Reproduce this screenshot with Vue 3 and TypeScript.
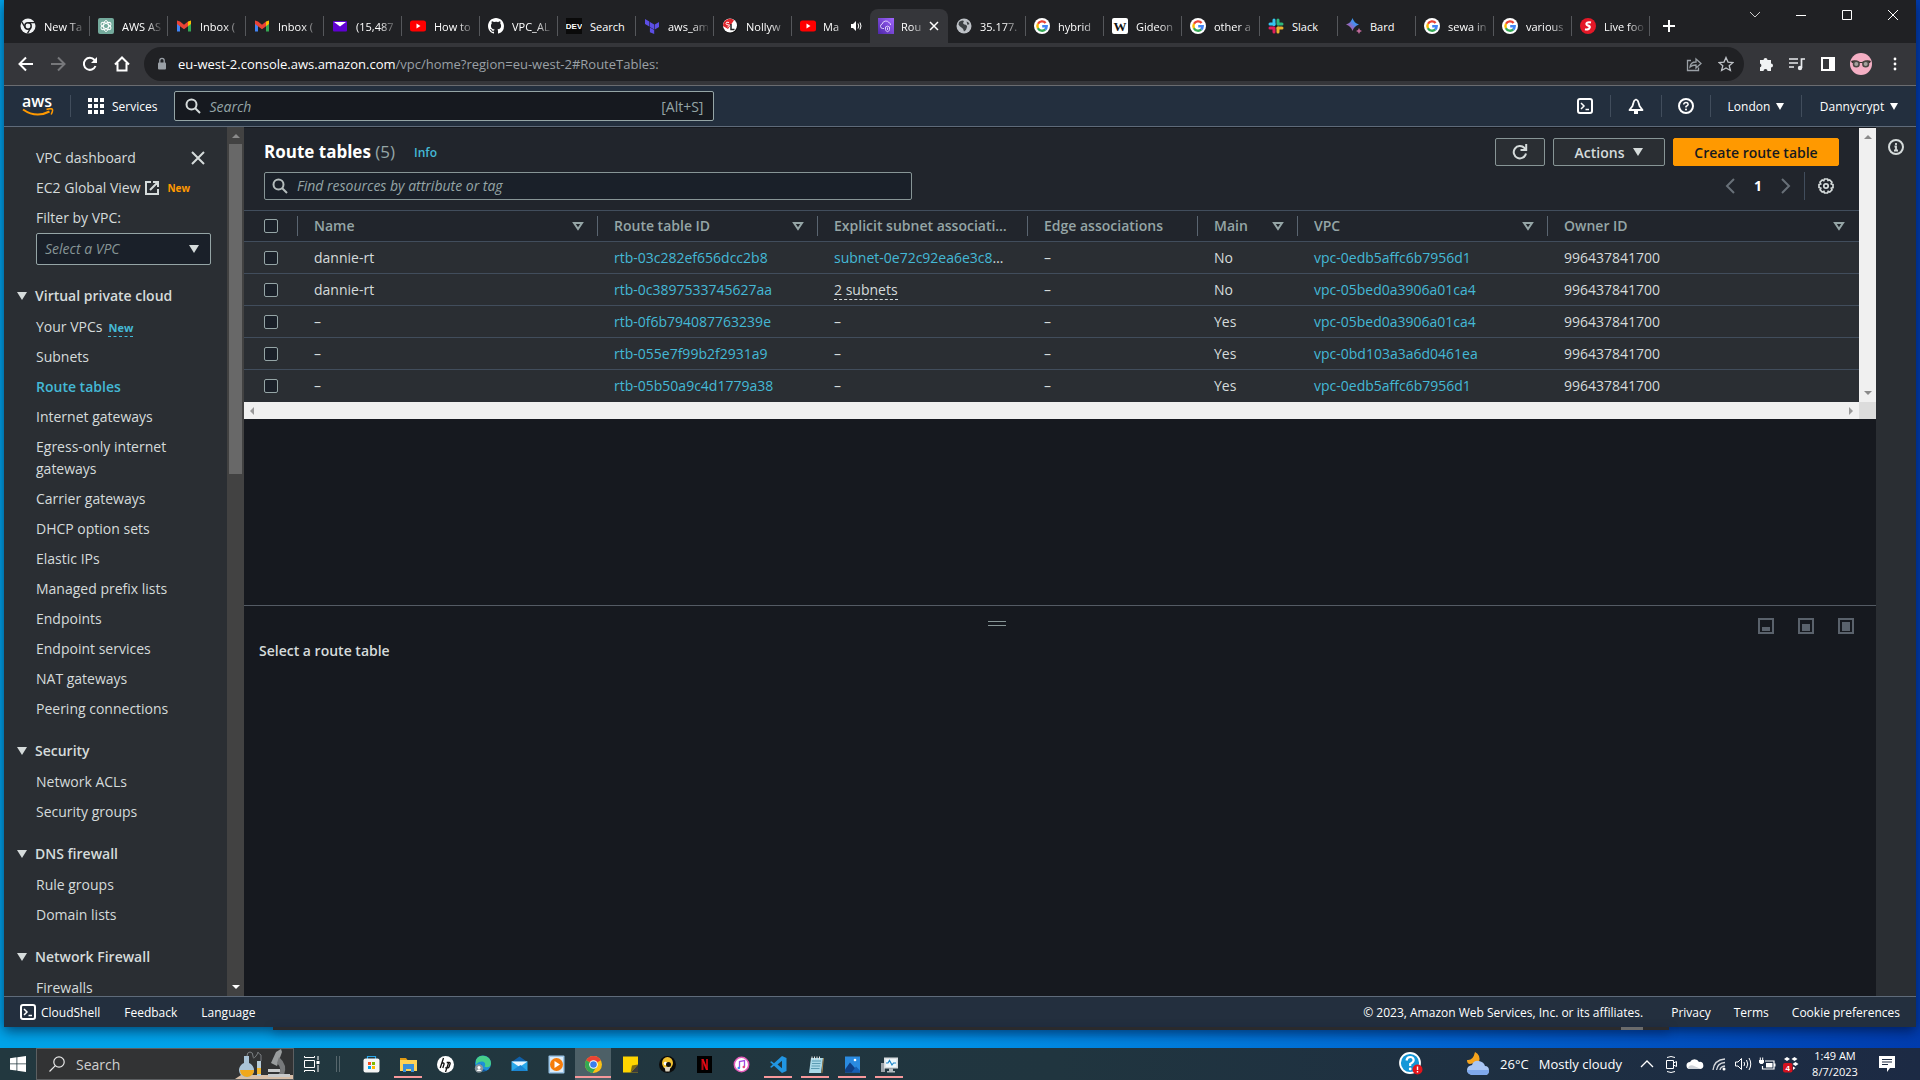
<script setup lang="ts">
interface Tab {
  label: string
  icon: string
  active?: boolean
  audio?: boolean
}

interface RouteTable {
  name: string
  id: string
  subnet: string
  subnetKind: 'link' | 'popover' | 'none'
  main: string
  vpc: string
}

interface NavSection {
  title: string
  items: { label: string; current?: boolean; isNew?: boolean }[]
}

interface TaskApp {
  label: string
  icon: string
  open?: boolean
  focused?: boolean
}

const google =
  '<circle cx="8" cy="8" r="8" fill="#fff"/><g fill="none" stroke-width="2.4"><path d="M11.600 5A4.600 4.600 0 0 0 4 5.800" stroke="#ea4335"/><path d="M4 5.700a4.800 4.800 0 0 0 0 4.600" stroke="#fbbc05"/><path d="M3.900 10.200a4.700 4.700 0 0 0 7.400 1.200" stroke="#34a853"/><path d="M11.200 11.500A4.700 4.700 0 0 0 12.700 8.200H8.200" stroke="#4285f4"/></g>'
const gmail =
  '<path d="M1 4v9.500h3V7.500z" fill="#4285f4"/><path d="M15 4v9.500h-3V7.500z" fill="#34a853"/><path d="M12 3.500l3-1v3.500l-3 2.200z" fill="#fbbc04"/><path d="M1 2.500l3 1 4 3.200 4-3.200v4.700L8 11.200 1 6z" fill="#ea4335"/>'
const youtube =
  '<rect x="0" y="2.500" width="16" height="11" rx="2.500" fill="#f00"/><path d="M6.500 5.500v5L10.500 8z" fill="#fff"/>'

const icons: Record<string, string> = {
  chromeMono:
    '<circle cx="8" cy="8" r="7.500" fill="#f1f3f4"/><circle cx="8" cy="8" r="3.200" fill="#f1f3f4" stroke="#202124" stroke-width="1.500"/><path d="M8 4.700h7M5.200 9.600L1.800 3.800M10.900 9.500L7.500 15.300" stroke="#202124" stroke-width="1.300"/>',
  openai:
    '<rect width="16" height="16" rx="2" fill="#74aa9c"/><g fill="none" stroke="#fff" stroke-width="0.900"><ellipse cx="8" cy="8" rx="2.500" ry="5.500"/><ellipse cx="8" cy="8" rx="2.500" ry="5.500" transform="rotate(60 8 8)"/><ellipse cx="8" cy="8" rx="2.500" ry="5.500" transform="rotate(120 8 8)"/></g>',
  gmail,
  yahoo:
    '<rect x="1" y="3" width="14" height="10.500" rx="1" fill="#5f01d1"/><path d="M2 4h12L8 8.500z" fill="#fff"/>',
  youtube,
  github:
    '<path fill="#fff" d="M8 0C3.580 0 0 3.580 0 8c0 3.540 2.290 6.530 5.470 7.590.4.070.55-.17.55-.38v-1.500c-2.010.37-2.530-.49-2.690-.94-.09-.23-.48-.94-.82-1.130-.28-.15-.68-.52-.01-.53.63-.01 1.080.58 1.230.82.72 1.210 1.870.87 2.330.66.07-.52.28-.87.51-1.070-1.780-.2-3.640-.89-3.640-3.950 0-.87.31-1.590.82-2.150-.08-.2-.36-1.020.08-2.120 0 0 .67-.21 2.200.82A7.600 7.600 0 0 1 8 3.870c.68 0 1.360.09 2 .27 1.530-1.040 2.200-.82 2.200-.82.44 1.100.16 1.920.08 2.120.51.56.82 1.270.82 2.150 0 3.070-1.870 3.750-3.650 3.950.29.25.54.73.54 1.480v2.190c0 .21.15.46.55.38A8 8 0 0 0 16 8c0-4.420-3.580-8-8-8z"/>',
  dev: '<rect width="16" height="16" fill="#0a0a0a"/><text x="8" y="11" text-anchor="middle" font-family="Liberation Sans, sans-serif" font-size="8" font-weight="700" fill="#fff">DEV</text>',
  terraform:
    '<path d="M1 1l4.300 2.500v5L1 6zM5.900 4l4.300 2.500v5L5.900 9zM15 4l-4.200 2.500v5L15 9zM5.900 9.600l4.300 2.500V16l-4.300-1.800z" fill="#5c4ee5"/>',
  nolly:
    '<circle cx="8.500" cy="8.500" r="7" fill="#111"/><circle cx="8" cy="7.500" r="7" fill="#fff"/><path d="M1 8A7 7 0 0 1 12 2.200L6 11z" fill="#e1272d"/><path d="M9 6v5.500h3.500" stroke="#222" stroke-width="1.500" fill="none"/><path d="M7 4.500q-3-1-3 .8t2.500 1.500-1 2.200" stroke="#fff" fill="none"/>',
  vpc: '<defs><linearGradient id="vp" x1="0" y1="1" x2="1" y2="0"><stop offset="0" stop-color="#4d27a8"/><stop offset="1" stop-color="#a166ff"/></linearGradient></defs><rect width="16" height="16" fill="url(#vp)"/><path d="M6 10.500H4.500A2.300 2.300 0 0 1 4.200 6 3.800 3.800 0 0 1 11 4.600 2.300 2.300 0 0 1 12.600 7M7.500 9v2.500c0 1.200 1 1.700 2 2.200 1-.5 2-1 2-2.200V9l-2-.9zM9.500 9.500v2.500" fill="none" stroke="#e9dcff" stroke-width="0.900"/>',
  globe:
    '<circle cx="8" cy="8" r="7.500" fill="#bdc1c6"/><path d="M3 4q3-2.500 5-1-2 2.500.5 3.500 3 .5 2.500 2.500-.5 3.500-3 4.500-.5-3-2.500-4T2.500 6.500z" fill="#3c4043"/><path d="M10.500 3.500q2 0 3 2.500l-2 1z" fill="#3c4043"/>',
  google,
  wiki: '<rect width="16" height="16" rx="2" fill="#fff"/><text x="8" y="12.500" text-anchor="middle" font-family="Liberation Serif, serif" font-size="13" font-weight="700" fill="#111">W</text>',
  slack:
    '<g stroke-width="3" stroke-linecap="round"><path d="M6 2v4.500" stroke="#36c5f0"/><path d="M2 6h4" stroke="#36c5f0"/><path d="M10 2v4" stroke="#2eb67d"/><path d="M10.500 6H14" stroke="#2eb67d"/><path d="M10 10v4" stroke="#ecb22e"/><path d="M10 10h4" stroke="#ecb22e"/><path d="M6 10v4" stroke="#e01e5a"/><path d="M2 10h3.500" stroke="#e01e5a"/></g>',
  bard: '<defs><linearGradient id="bd" x1="0" y1="1" x2="1" y2="0"><stop offset="0" stop-color="#d96570"/><stop offset=".35" stop-color="#9168c0"/><stop offset=".6" stop-color="#4a8df0"/><stop offset="1" stop-color="#1ba1e3"/></linearGradient></defs><path d="M6.500 0Q8 5 13 6.500 8 8 6.500 13 5 8 0 6.500 5 5 6.500 0z" fill="url(#bd)"/><path d="M13 10q.5 2.500 3 3-2.500.5-3 3-.5-2.500-3-3 2.500-.5 3-3z" fill="#c06a9a"/>',
  sporty:
    '<circle cx="8" cy="8" r="8" fill="#e41827"/><path d="M11 4.500c-3.500-.8-5 .5-4.500 2s3.800.8 3.200 3-3 2.200-4.700 1.700" fill="none" stroke="#fff" stroke-width="2.200"/>',
  store:
    '<path d="M5.500 4V1.500h8V4" fill="none" stroke="#2aa6e8" stroke-width="1.200"/><rect x="1.500" y="3.500" width="16" height="14" rx="2" fill="#f5f5f5"/><path d="M6 7h3v3H6z" fill="#f25022"/><path d="M10 7h3v3h-3z" fill="#7fba00"/><path d="M6 11h3v3H6z" fill="#00a4ef"/><path d="M10 11h3v3h-3z" fill="#ffb900"/>',
  explorer:
    '<path d="M1 3h6l1.500 2H1z" fill="#e09b12"/><path d="M1 5h17v11H1z" fill="#ffd256"/><path d="M4 9h11v8h-3v-3H7v3H4z" fill="#3b8fd9"/>',
  hp: '<circle cx="9.500" cy="9.500" r="8.500" fill="#fff"/><path d="M7.500 3L4.200 13M5.700 8h1.500q1.200 0 .8 1.200L6.800 13M12.700 7.500L9.500 17M10.700 7.500h2.500q1.300 0 .9 1.200l-1 3q-.4 1.200-1.400 1.200h-2.500" fill="none" stroke="#111" stroke-width="1.300"/>',
  edge: '<circle cx="10" cy="8.500" r="8" fill="#1b8fd8"/><path d="M3 5a8 8 0 0 1 15 3.500c0 4-5 4.500-6.500 3 1.500-2 .5-5-2.500-5-2.500 0-4.500 1-6 3z" fill="#46cf8a"/><path d="M9 8.500c-2 3 0 7 5 6.500a8 8 0 0 1-9-1z" fill="#0d4a99"/><circle cx="6" cy="13.500" r="4.200" fill="#8b959c"/><circle cx="6" cy="12.500" r="1.500" fill="#fff"/><path d="M3.500 16q2.500-3.500 5 0z" fill="#fff"/>',
  mail: '<path d="M1.500 7L9.500 1.500 17.500 7z" fill="#0f5fa8"/><path d="M1.500 6.500h16V16h-16z" fill="#29a8ea"/><path d="M1.500 6.500h16L9.500 12z" fill="#e9f6ff"/><path d="M1.500 16l9-6 7 6z" fill="#1b86d3"/>',
  media:
    '<rect x="1.500" y="0.500" width="16" height="18" rx="1" fill="#9cc6e8"/><rect x="3" y="2" width="13" height="15" fill="#dcecf8"/><circle cx="9.500" cy="9.500" r="6.500" fill="#f57c0a"/><path d="M7.500 6v7l5.500-3.500z" fill="#fff"/>',
  chrome:
    '<circle cx="9.500" cy="9.500" r="8.500" fill="#fbc116"/><path d="M9.500 9.500L2.100 5.300a8.500 8.500 0 0 1 14.800 0z" fill="#ea4335"/><path d="M9.500 9.500L2.100 5.300a8.500 8.500 0 0 0 6.400 12.600L13 11z" fill="#34a853"/><circle cx="9.500" cy="9.500" r="4.300" fill="#fff"/><circle cx="9.500" cy="9.500" r="3.300" fill="#3b7ded"/>',
  sticky: '<path d="M2 1.500h15v16H2z" fill="#ffd500"/><path d="M17 9.500v8H9.500z" fill="#3b3b3b"/><path d="M9.500 17.500l1.500-7 6-1z" fill="#7d6b12"/>',
  skull:
    '<circle cx="9.500" cy="9.500" r="8.500" fill="#0b0b0b"/><ellipse cx="9.500" cy="8" rx="5.500" ry="6" fill="#f2c230"/><path d="M6.500 12h6l-1 4.500h-4z" fill="#e0d6c0"/><circle cx="7.500" cy="8.500" r="1.800" fill="#fff"/><circle cx="10.500" cy="9.500" r="2.500" fill="#111"/>',
  netflix:
    '<path d="M2 1h15v17H2z" fill="#000"/><path d="M6.500 4h2v11h-2zM11 4h2v11h-2z" fill="#b20710"/><path d="M6.500 4h2L13 15h-2z" fill="#e50914"/>',
  itunes:
    '<circle cx="9.500" cy="9.500" r="7.200" fill="#fff" stroke="#e35ab8" stroke-width="1.500"/><path d="M7.500 13V6.500l5-1V12" fill="none" stroke="#a24be0" stroke-width="1.300"/><circle cx="6.800" cy="13" r="1.300" fill="#3f8df5"/><circle cx="11.800" cy="12" r="1.300" fill="#e8477e"/>',
  vscode:
    '<path d="M13 1l4.500 2v13L13 18 5 10.800l-2.500 2L1 12l2.800-2.500L1 7l1.500-.8 2.500 2z" fill="#2196e3"/><path d="M13 5.800v7.400L8.500 9.500z" fill="#22373f"/>',
  notepad:
    '<path d="M5 3h12l-2 15H3z" fill="#a8d8e8"/><path d="M6 6h9M6 8.500h8.500M5.500 11H14M5 13.500h8.500" stroke="#5c9cb3"/><path d="M6 1.500v3M8.500 1.500v3M11 1.500v3M13.500 1.500v3" stroke="#e5e5e5"/><path d="M15.500 18L17 3l.8 0-1.500 15z" fill="#c49a55"/>',
  photos:
    '<path d="M2 1.500h15v16H2z" fill="#2a8be0"/><path d="M2 17.500v-3l5-7 9 10z" fill="#0f3f84"/><path d="M8.500 17.500l4.500-6 4 4v2z" fill="#1660b5"/><circle cx="12" cy="5" r="1.300" fill="#fff"/>',
  monitor:
    '<path d="M1 8h4v9H1z" fill="#9ba4ab"/><rect x="4" y="2.500" width="14" height="11" fill="#d8dde0"/><rect x="5.500" y="4" width="11" height="8" fill="#eef7fb"/><path d="M6 8h2l1.500-2.500L12 10l1.500-2H16" fill="none" stroke="#1c86c9" stroke-width="1.200"/><path d="M9 13.500h4V16h2v1.500H7V16h2z" fill="#b3babf"/>',
}

const tabs: Tab[] = [
  { label: 'New Ta', icon: 'chromeMono' },
  { label: 'AWS AS', icon: 'openai' },
  { label: 'Inbox (', icon: 'gmail' },
  { label: 'Inbox (', icon: 'gmail' },
  { label: '(15,487', icon: 'yahoo' },
  { label: 'How to', icon: 'youtube' },
  { label: 'VPC_AL', icon: 'github' },
  { label: 'Search', icon: 'dev' },
  { label: 'aws_am', icon: 'terraform' },
  { label: 'Nollyw', icon: 'nolly' },
  { label: 'Ma', icon: 'youtube', audio: true },
  { label: 'Rou', icon: 'vpc', active: true },
  { label: '35.177.', icon: 'globe' },
  { label: 'hybrid', icon: 'google' },
  { label: 'Gideon', icon: 'wiki' },
  { label: 'other a', icon: 'google' },
  { label: 'Slack', icon: 'slack' },
  { label: 'Bard', icon: 'bard' },
  { label: 'sewa in', icon: 'google' },
  { label: 'various', icon: 'google' },
  { label: 'Live foo', icon: 'sporty' },
]

const sections: NavSection[] = [
  {
    title: 'Virtual private cloud',
    items: [
      { label: 'Your VPCs', isNew: true },
      { label: 'Subnets' },
      { label: 'Route tables', current: true },
      { label: 'Internet gateways' },
      { label: 'Egress-only internet gateways' },
      { label: 'Carrier gateways' },
      { label: 'DHCP option sets' },
      { label: 'Elastic IPs' },
      { label: 'Managed prefix lists' },
      { label: 'Endpoints' },
      { label: 'Endpoint services' },
      { label: 'NAT gateways' },
      { label: 'Peering connections' },
    ],
  },
  { title: 'Security', items: [{ label: 'Network ACLs' }, { label: 'Security groups' }] },
  { title: 'DNS firewall', items: [{ label: 'Rule groups' }, { label: 'Domain lists' }] },
  { title: 'Network Firewall', items: [{ label: 'Firewalls' }] },
]

const columns = [
  { label: 'Name', filter: true },
  { label: 'Route table ID', filter: true },
  { label: 'Explicit subnet associations', filter: false },
  { label: 'Edge associations', filter: false },
  { label: 'Main', filter: true },
  { label: 'VPC', filter: true },
  { label: 'Owner ID', filter: true },
]

const owner = '996437841700'
const rows: RouteTable[] = [
  { name: 'dannie-rt', id: 'rtb-03c282ef656dcc2b8', subnet: 'subnet-0e72c92ea6e3c8d41', subnetKind: 'link', main: 'No', vpc: 'vpc-0edb5affc6b7956d1' },
  { name: 'dannie-rt', id: 'rtb-0c3897533745627aa', subnet: '2 subnets', subnetKind: 'popover', main: 'No', vpc: 'vpc-05bed0a3906a01ca4' },
  { name: '–', id: 'rtb-0f6b794087763239e', subnet: '–', subnetKind: 'none', main: 'Yes', vpc: 'vpc-05bed0a3906a01ca4' },
  { name: '–', id: 'rtb-055e7f99b2f2931a9', subnet: '–', subnetKind: 'none', main: 'Yes', vpc: 'vpc-0bd103a3a6d0461ea' },
  { name: '–', id: 'rtb-05b50a9c4d1779a38', subnet: '–', subnetKind: 'none', main: 'Yes', vpc: 'vpc-0edb5affc6b7956d1' },
]

const apps: TaskApp[] = [
  { label: 'Microsoft Store', icon: 'store' },
  { label: 'File Explorer', icon: 'explorer', open: true },
  { label: 'HP', icon: 'hp' },
  { label: 'Edge', icon: 'edge' },
  { label: 'Mail', icon: 'mail' },
  { label: 'Media player', icon: 'media' },
  { label: 'Chrome', icon: 'chrome', open: true, focused: true },
  { label: 'Sticky Notes', icon: 'sticky' },
  { label: 'Winamp', icon: 'skull' },
  { label: 'Netflix', icon: 'netflix' },
  { label: 'iTunes', icon: 'itunes' },
  { label: 'Visual Studio Code', icon: 'vscode', open: true },
  { label: 'Notepad', icon: 'notepad', open: true },
  { label: 'Photos', icon: 'photos', open: true },
  { label: 'Resource monitor', icon: 'monitor', open: true },
]
</script>

<template>
  <div class="desktop">
    <div class="window">
      <header class="tabstrip">
        <div class="tabs">
          <div v-for="(tab, i) in tabs" :key="i" class="tab" :class="{ active: tab.active, quiet: tab.audio }">
            <svg class="fav" viewBox="0 0 16 16" v-html="icons[tab.icon]"></svg>
            <span class="tab-label">{{ tab.label }}</span>
            <svg v-if="tab.audio" class="tab-extra" viewBox="0 0 12 12"><path d="M1 4h2l3-3v10L3 8H1z" fill="#fff" /><path d="M8 3.500q1.500 2.500 0 5M10 2.500q2 3.500 0 7" fill="none" stroke="#fff" /></svg>
            <button v-if="tab.active" class="tab-extra plain" aria-label="Close tab"><svg viewBox="0 0 12 12"><path d="M2 2l8 8M10 2l-8 8" stroke="#fff" stroke-width="1.500" /></svg></button>
          </div>
        </div>
        <div class="frame-controls">
          <button class="plain new-tab" aria-label="New tab"><svg viewBox="0 0 14 14" width="14" height="14"><path d="M7 1v12M1 7h12" stroke="#fff" stroke-width="2" /></svg></button>
          <div class="caption">
            <button class="plain" aria-label="Search tabs"><svg viewBox="0 0 12 12" width="12" height="12"><path d="M1 3l5 5 5-5" fill="none" stroke="#ccc" /></svg></button>
            <button class="plain" aria-label="Minimize"><svg viewBox="0 0 12 12" width="12" height="12"><path d="M1 6.500h10" stroke="#fff" /></svg></button>
            <button class="plain" aria-label="Maximize"><svg viewBox="0 0 12 12" width="12" height="12"><path d="M1.500 1.500h9v9h-9z" fill="none" stroke="#fff" /></svg></button>
            <button class="plain" aria-label="Close"><svg viewBox="0 0 12 12" width="12" height="12"><path d="M1 1l10 10M11 1L1 11" stroke="#fff" /></svg></button>
          </div>
        </div>
      </header>

      <div class="toolbar">
        <button class="plain" aria-label="Back"><svg viewBox="0 0 16 16"><path d="M15 8H2M8 1.500L1.500 8 8 14.500" fill="none" stroke="#fff" stroke-width="2" /></svg></button>
        <button class="plain" aria-label="Forward"><svg viewBox="0 0 16 16"><path d="M1 8h13M8 1.500L14.500 8 8 14.500" fill="none" stroke="#77787b" stroke-width="2" /></svg></button>
        <button class="plain" aria-label="Reload"><svg viewBox="0 0 16 16"><path d="M13.500 10A6 6 0 1 1 12.500 4L14 5.500" fill="none" stroke="#fff" stroke-width="2" /><path d="M15 1v6H9z" fill="#fff" /></svg></button>
        <button class="plain" aria-label="Home"><svg viewBox="0 0 16 16"><path d="M1 8.500L8 1.500l7 7M3.500 7v7.500h9V7" fill="none" stroke="#fff" stroke-width="2" /></svg></button>
        <div class="omnibox">
          <svg class="lock" viewBox="0 0 10 14"><rect x="1" y="5.500" width="8" height="7" rx="1" fill="#9aa0a6" /><path d="M2.800 6V3.500a2.200 2.200 0 0 1 4.400 0V6" fill="none" stroke="#9aa0a6" stroke-width="1.300" /></svg>
          <p class="url"><span>eu-west-2.console.aws.amazon.com</span>/vpc/home?region=eu-west-2#RouteTables:</p>
          <svg class="ic16" viewBox="0 0 16 16"><path d="M5 4.500H1.500v10h11v-3M4 11q.5-5 6-5V3l5 4.500-5 4.500V9q-4 0-6 2z" fill="none" stroke="#9aa0a6" stroke-width="1.300" /></svg>
          <svg class="ic16" viewBox="0 0 16 16"><path d="M8 1.500l2 4.600 5 .4-3.800 3.200L12.400 14.500 8 11.900l-4.400 2.600 1.200-4.800L1 6.500l5-.4z" fill="none" stroke="#bdc1c6" stroke-width="1.300" /></svg>
        </div>
        <div class="ext">
          <svg class="ic16" viewBox="0 0 16 16"><path d="M2 4h3.500a2 2 0 1 1 4 0H13v3.500a2 2 0 1 1 0 4V15H9.500a2 2 0 0 0-4 0H2v-3.700a2 2 0 0 0 0-3.800z" fill="#f1f3f4" /></svg>
          <svg class="ic16" viewBox="0 0 16 16"><path d="M0 3h9M0 7h9M0 11h5M12.500 12V3H16" stroke="#e8eaed" stroke-width="1.700" fill="none" /><circle cx="11" cy="12" r="2.200" fill="#e8eaed" /></svg>
          <svg class="ic16" viewBox="0 0 16 16"><path d="M2 2h12v12H2z" fill="none" stroke="#fff" stroke-width="2" /><path d="M9 2h5v12H9z" fill="#fff" /></svg>
          <svg class="avatar" viewBox="0 0 22 22"><circle cx="11" cy="11" r="11" fill="#f4afc4" /><path d="M1 8q4-2 9 1h2q5-3 9-1l-1 2H2z" fill="#3a3330" /><circle cx="6.300" cy="11" r="3.600" fill="#4b4743" /><circle cx="15.700" cy="11" r="3.600" fill="#4b4743" /><circle cx="6.300" cy="11" r="2" fill="#a5a29e" /><circle cx="15.700" cy="11" r="2" fill="#a5a29e" /></svg>
          <svg class="ic16" viewBox="0 0 16 16" fill="#fff"><circle cx="8" cy="3" r="1.400" /><circle cx="8" cy="8" r="1.400" /><circle cx="8" cy="13" r="1.400" /></svg>
        </div>
      </div>

      <nav class="aws-nav">
        <a class="logo" href="#" aria-label="AWS home">
          <span class="logo-word">aws</span>
          <svg viewBox="0 0 32 9"><path d="M1 1.500Q14 10.500 27.500 3.500" fill="none" stroke="#f90" stroke-width="2" /><path d="M24.500 1.600q4-1.400 5.500-.6t-.8 5.500" fill="none" stroke="#f90" stroke-width="1.600" /></svg>
        </a>
        <button class="plain services">
          <svg viewBox="0 0 16 16" width="16" height="16" fill="#fff"><path d="M0 0h4v4H0zM6 0h4v4H6zM12 0h4v4h-4zM0 6h4v4H0zM6 6h4v4H6zM12 6h4v4h-4zM0 12h4v4H0zM6 12h4v4H6zM12 12h4v4h-4z" /></svg>
          Services
        </button>
        <label class="global-search">
          <svg class="ic16" viewBox="0 0 16 16"><circle cx="6.500" cy="6.500" r="5" fill="none" stroke="#d5dbdb" stroke-width="2" /><path d="M10 10l5 5" stroke="#d5dbdb" stroke-width="2" /></svg>
          <input type="text" placeholder="Search" aria-label="Search" />
          <span>[Alt+S]</span>
        </label>
        <div class="nav-right">
          <button class="plain cell w-shell" aria-label="CloudShell"><svg class="ic16" viewBox="0 0 16 16"><rect x="1" y="1" width="14" height="14" rx="2" fill="none" stroke="#fff" stroke-width="2" /><path d="M4 5l3 3-3 3M8.500 11.500H12" fill="none" stroke="#fff" stroke-width="1.500" /></svg></button>
          <button class="plain cell w-bell" aria-label="Notifications"><svg class="ic16" viewBox="0 0 16 16"><path d="M8 1.500Q6 2 5.500 4.500L4.500 8 1.500 12h13L11.500 8l-1-3.500Q10 2 8 1.500z" fill="none" stroke="#fff" stroke-width="1.800" stroke-linejoin="round" /><path d="M6 13h4v3H6z" fill="#fff" /></svg></button>
          <button class="plain cell w-help" aria-label="Help"><svg class="ic16" viewBox="0 0 16 16"><circle cx="8" cy="8" r="7" fill="none" stroke="#fff" stroke-width="2" /><path d="M5.700 6.500Q6 4.500 8 4.500t2.200 1.800Q10.200 7.500 8 8.500V9.500" fill="none" stroke="#fff" stroke-width="1.500" /><circle cx="8" cy="11.500" r="1" fill="#fff" /></svg></button>
          <button class="plain cell w-region">London <i class="caret"></i></button>
          <button class="plain cell w-user">Dannycrypt <i class="caret"></i></button>
        </div>
      </nav>

      <div class="console">
        <aside class="sidebar">
          <div class="side-top">
            <div class="side-line"><a href="#">VPC dashboard</a><button class="plain close" aria-label="Close navigation"><svg viewBox="0 0 14 14" width="14" height="14"><path d="M1 1l12 12M13 1L1 13" stroke="#d5dbdb" stroke-width="2" /></svg></button></div>
            <div class="side-line">
              <a href="#">EC2 Global View</a>
              <svg class="external" viewBox="0 0 14 14" width="14" height="14"><path d="M6 1H1v12h12V8M8 1h5v5M13 1L5 9" fill="none" stroke="#d5dbdb" stroke-width="2" /></svg>
              <span class="new-orange">New</span>
            </div>
            <label for="vpc-filter">Filter by VPC:</label>
          </div>
          <div class="select-wrap">
            <select id="vpc-filter"><option>Select a VPC</option></select>
            <i class="caret"></i>
          </div>
          <section v-for="section in sections" :key="section.title">
            <h2><i class="caret"></i>{{ section.title }}</h2>
            <ul>
              <li v-for="item in section.items" :key="item.label">
                <a href="#" :class="{ current: item.current }">{{ item.label }}</a>
                <span v-if="item.isNew" class="new-blue">New</span>
              </li>
            </ul>
          </section>
        </aside>
        <div class="side-scroll"><i class="up"></i><b></b><i class="down"></i></div>

        <main>
          <div class="upper">
            <div class="table-box">
              <div class="table-pane">
                <div class="pane-head">
                  <div class="pane-row">
                    <h1>Route tables <span>(5)</span></h1>
                    <a class="info" href="#">Info</a>
                    <div class="actions">
                      <button class="btn refresh" aria-label="Refresh"><svg class="ic16" viewBox="0 0 16 16"><path d="M14 9.500A6.200 6.200 0 1 1 12.500 4L14 5.500" fill="none" stroke="#d5dbdb" stroke-width="2" /><path d="M14.200 0v6H8.500" fill="none" stroke="#d5dbdb" stroke-width="2" /></svg></button>
                      <button class="btn act">Actions <i class="caret"></i></button>
                      <button class="btn primary">Create route table</button>
                    </div>
                  </div>
                  <div class="pane-row">
                    <label class="find">
                      <svg class="ic16" viewBox="0 0 16 16"><circle cx="6.500" cy="6.500" r="5" fill="none" stroke="#b5bdbd" stroke-width="2" /><path d="M10 10l5 5" stroke="#b5bdbd" stroke-width="2" /></svg>
                      <input type="text" placeholder="Find resources by attribute or tag" aria-label="Find resources" />
                    </label>
                    <div class="pager">
                      <button class="plain" aria-label="Previous page"><svg viewBox="0 0 10 16" width="10" height="16"><path d="M9 1L2 8l7 7" fill="none" stroke="#687078" stroke-width="2" /></svg></button>
                      <b>1</b>
                      <button class="plain" aria-label="Next page"><svg viewBox="0 0 10 16" width="10" height="16"><path d="M1 1l7 7-7 7" fill="none" stroke="#687078" stroke-width="2" /></svg></button>
                      <button class="plain gear" aria-label="Preferences"><svg class="ic16" viewBox="0 0 16 16"><path d="M6.500 1h3l.5 1.500 1.700-.6 2.200 2.300-.7 1.600 1.800.8v3l-1.700.6.700 1.700-2.200 2.100-1.600-.7-.7 1.700h-3l-.6-1.700-1.700.7-2.100-2.200.7-1.600L1 9.500v-3l1.700-.6L2 4.200 4.200 2l1.600.7z" fill="none" stroke="#d5dbdb" stroke-width="1.700" /><circle cx="8" cy="8" r="2.200" fill="none" stroke="#d5dbdb" stroke-width="1.700" /></svg></button>
                    </div>
                  </div>
                </div>
                <table>
                  <colgroup>
                    <col class="c-check" /><col class="c-name" /><col class="c-id" /><col class="c-subnet" /><col class="c-edge" /><col class="c-main" /><col class="c-vpc" /><col />
                  </colgroup>
                  <thead>
                    <tr>
                      <th class="check"><div><input type="checkbox" aria-label="Select all" /></div></th>
                      <th v-for="col in columns" :key="col.label">
                        <div>
                          <span>{{ col.label }}</span>
                          <svg v-if="col.filter" viewBox="0 0 12 10" width="12" height="10"><path d="M2 2h8L6 8z" fill="none" stroke="#95a5a6" stroke-width="2" /></svg>
                        </div>
                      </th>
                    </tr>
                  </thead>
                  <tbody>
                    <tr v-for="row in rows" :key="row.id">
                      <td class="check"><input type="checkbox" :aria-label="'Select ' + row.id" /></td>
                      <td>{{ row.name }}</td>
                      <td><a href="#">{{ row.id }}</a></td>
                      <td>
                        <a v-if="row.subnetKind === 'link'" href="#">{{ row.subnet }}</a>
                        <span v-else :class="{ popover: row.subnetKind === 'popover' }">{{ row.subnet }}</span>
                      </td>
                      <td>–</td>
                      <td>{{ row.main }}</td>
                      <td><a href="#">{{ row.vpc }}</a></td>
                      <td>{{ owner }}</td>
                    </tr>
                  </tbody>
                </table>
              </div>
              <div class="vscroll"><i class="up"></i><i class="down"></i></div>
            </div>
            <div class="hscroll"><i class="left"></i><i class="right"></i><b></b></div>
          </div>
          <div class="lower">
            <div class="split-bar">
              <span></span>
              <div class="handle"></div>
              <div class="sizes">
                <svg viewBox="0 0 16 16"><path d="M1 1h14v14H1z" fill="none" stroke="#5a626c" stroke-width="2" /><path d="M4 9h8v4H4z" fill="#5a626c" /></svg>
                <svg viewBox="0 0 16 16"><path d="M1 1h14v14H1z" fill="none" stroke="#5a626c" stroke-width="2" /><path d="M4 6h8v7H4z" fill="#5a626c" /></svg>
                <svg viewBox="0 0 16 16"><path d="M1 1h14v14H1z" fill="none" stroke="#5a626c" stroke-width="2" /><path d="M4 4h8v9H4z" fill="#5a626c" /></svg>
              </div>
            </div>
            <h3>Select a route table</h3>
          </div>
        </main>
        <div class="help-rail"><svg class="ic16" viewBox="0 0 16 16"><circle cx="8" cy="8" r="7" fill="none" stroke="#d5dbdb" stroke-width="2" /><path d="M8 4v2M6.500 7.500H8V11M6 11.500h4" fill="none" stroke="#d5dbdb" stroke-width="1.800" /></svg></div>
      </div>

      <footer class="aws-foot">
        <div class="foot-group">
          <a href="#" class="shell"><svg class="ic16" viewBox="0 0 16 16"><rect x="1" y="1" width="14" height="14" rx="2" fill="none" stroke="#fff" stroke-width="2" /><path d="M4 5l3 3-3 3M8.500 11.500H12" fill="none" stroke="#fff" stroke-width="1.500" /></svg>CloudShell</a>
          <a href="#">Feedback</a>
          <a href="#">Language</a>
        </div>
        <div class="foot-group legal">
          <span class="copy">© 2023, Amazon Web Services, Inc. or its affiliates.</span>
          <a href="#">Privacy</a>
          <a href="#">Terms</a>
          <a href="#">Cookie preferences</a>
        </div>
      </footer>
    </div>

    <div class="wallpaper"><div class="back-window"><i></i></div></div>

    <footer class="taskbar">
      <button class="plain start" aria-label="Start"><svg class="ic16" viewBox="0 0 16 16" fill="#fff"><path d="M0 2.200l6.500-.9v6.200H0zM7.300 1.200L16 0v7.500H7.300zM0 8.300h6.500v6.300L0 13.700zM7.300 8.300H16V16l-8.700-1.200z" /></svg></button>
      <label class="task-search">
        <svg class="ic16" viewBox="0 0 16 16"><circle cx="10" cy="6" r="5.200" fill="none" stroke="#e8e8e8" stroke-width="1.200" /><path d="M6.300 9.700L.5 15.500" stroke="#e8e8e8" stroke-width="1.200" /></svg>
        <input type="text" placeholder="Search" aria-label="Search Windows" />
        <svg class="lab" viewBox="0 0 58 30"><path d="M0 30l6-4h52v4z" fill="#d8bfa8" /><path d="M12 7q0-4 3-4t3 4 3 0 2-4 3 3v6" fill="none" stroke="#7b7f82" /><path d="M9 7h5v7a7.500 7.500 0 1 1-5 0z" fill="#a9c3d6" /><path d="M5 21h14a7 7 0 0 1-14 0z" fill="#f0a81c" /><path d="M22 12h4v15h-4z" fill="#b8ccd8" /><path d="M22 19h4v6h-4z" fill="#f3b52a" /><path d="M41 3l5-3 1 3-5 14-6-3z" fill="#9a9d9e" /><path d="M44 8q9 8 5 18h-6q5-6-1-12z" fill="#77797b" /><path d="M33 20h12v3H33zM33 25h22v3H33z" fill="#c8cacb" /></svg>
      </label>
      <svg class="taskview" viewBox="0 0 16 16"><path d="M.5 4.500h10v7H.500zM.5 0v1.500h10V0M.5 16v-1.500h10V16M14 0v4M14 9v7" fill="none" stroke="#fff" /><path d="M12.500 5h3v3h-3z" fill="#fff" /></svg>
      <div class="grip"></div>
      <div class="apps">
        <button v-for="app in apps" :key="app.label" class="plain app" :class="{ open: app.open, focused: app.focused }" :aria-label="app.label">
          <svg viewBox="0 0 19 19" v-html="icons[app.icon]"></svg>
        </button>
      </div>
      <div class="tray">
        <svg class="hp-help" viewBox="0 0 24 24"><circle cx="11" cy="11" r="10" fill="#1497d8" stroke="#fff" stroke-width="1.800" /><path d="M7.500 8.500q.5-3.500 3.700-3.500t3.500 3q0 2-3.500 4V14" fill="none" stroke="#fff" stroke-width="2.200" /><circle cx="11.200" cy="17" r="1.400" fill="#fff" /><circle cx="18.500" cy="17.500" r="5" fill="#e3151b" /><path d="M18.500 14.500v3.500M18.500 19v1.500" stroke="#fff" stroke-width="1.400" /></svg>
        <button class="plain weather">
          <svg viewBox="0 0 24 24" width="24" height="24"><path d="M9 0q6 3 4 10L4 12q-3 0-3-4 6 1 8-8z" fill="#f5a31d" /><path d="M6 23q-5-1-5-5t5-5q2-5 7-4t6 5q4 0 4 4.500T19 23z" fill="#a9c6f5" /><path d="M6 23q-5-1-5-5l22 0q0 5-4 5z" fill="#7fa9ec" /></svg>
          <span>26°C</span><span>Mostly cloudy</span>
        </button>
        <div class="tray-icons">
          <svg viewBox="0 0 18 18"><path d="M3 12l6-6 6 6" fill="none" stroke="#fff" stroke-width="1.300" /></svg>
          <svg viewBox="0 0 18 18"><path d="M4.500 5.500h7v8h-7zM11.500 8l3-1.500v5l-3-1.500M5 2.500q4-2 8 0M5 16.500q4 2 8 0" fill="none" stroke="#fff" /></svg>
          <svg viewBox="0 0 18 18"><path d="M4 14a3.500 3.500 0 0 1 0-7 5 5 0 0 1 9 0 3.500 3.500 0 0 1 1.500 7z" fill="#fff" /><path d="M2 13.500q1-4 5-3l8 3.500H4z" fill="#cfd3d8" /></svg>
          <svg viewBox="0 0 18 18"><path d="M3 15Q4 5 15 4M6.500 15Q7.500 8 15 7.500M10 15q.5-3.500 5-4" fill="none" stroke="#d5d8dc" stroke-width="1.300" /><circle cx="14" cy="14" r="1.500" fill="#fff" /></svg>
          <svg viewBox="0 0 18 18"><path d="M1.500 7h2.500l3.500-3.500v11L4 11H1.500zM10 7q1.200 2 0 4M12.500 5q2.500 4 0 8M15 3q3.500 6 0 12" fill="none" stroke="#fff" /></svg>
          <svg viewBox="0 0 18 18"><path d="M7 6h9v8H4.500v-3" fill="none" stroke="#fff" stroke-width="1.200" /><path d="M8 8h6.500v4.500H8zM16 8.500h1.500v3H16zM1 5h5v2.500L4.500 9h-2L1 7.500z" fill="#fff" /><path d="M2.300 2.500V5M4.700 2.500V5" stroke="#fff" /></svg>
          <svg viewBox="0 0 18 18"><path d="M5 2l3 2-3 2-3-2zM12.500 2l3 2-3 2-3-2zM13.500 7l3 2-3 2-3-2zM11 11.500l2.500 1.500-2.500 2z" fill="#fff" /><rect x="1" y="8" width="9.500" height="9.500" rx="2" fill="#d4121e" /><text x="5.700" y="16" text-anchor="middle" font-family="Liberation Sans, sans-serif" font-weight="700" font-size="8" fill="#fff">4</text></svg>
        </div>
        <div class="clock"><span>1:49 AM</span><span>8/7/2023</span></div>
        <svg class="note" viewBox="0 0 18 18"><path d="M1 1h16v12h-5l-3 4v-4H1z" fill="#fff" /><path d="M4 4.500h10M4 7h10M4 9.500h6" stroke="#1e2b42" stroke-width="1.200" /></svg>
      </div>
    </footer>
  </div>
</template>

<style>
body {
  background: #0a6ad0;
}
</style>

<style scoped>
* {
  box-sizing: border-box;
  margin: 0;
}
.desktop {
  display: flex;
  flex-direction: column;
  height: 100vh;
  overflow: hidden;
  font-family: "Open Sans", "Noto Sans", sans-serif;
  background: linear-gradient(90deg, #00a3e8, #00a2ee 40%, #0064d0 75%, #003cae);
}
a {
  color: inherit;
  text-decoration: none;
}
svg {
  display: block;
  flex: none;
}
ul {
  list-style: none;
  padding: 0;
}
.plain {
  padding: 0;
  border: 0;
  background: none;
  color: inherit;
  font: inherit;
  display: flex;
  align-items: center;
  justify-content: center;
}
input,
select {
  font: inherit;
  color: inherit;
}
.ic16,
.fav {
  width: 16px;
  height: 16px;
}
.caret {
  display: inline-block;
  border: 5px solid transparent;
  border-top: 8px solid currentColor;
  border-bottom: 0;
  flex: none;
}
.window {
  flex: 1;
  min-height: 0;
  margin: 0 4px;
  display: flex;
  flex-direction: column;
  box-shadow: 0 4px 12px rgba(0, 10, 40, 0.6);
}

/* tab strip */
.tabstrip {
  height: 43px;
  display: flex;
  background: #202124;
  padding-left: 8px;
  color: #fff;
}
.tabs {
  flex: 1;
  min-width: 0;
  display: flex;
  align-items: flex-end;
}
.tab {
  position: relative;
  flex: 1 1 78px;
  min-width: 0;
  height: 34px;
  display: flex;
  align-items: center;
  gap: 8px;
  padding: 0 2px 0 8px;
  font-size: 11px;
}
.tab::after {
  content: "";
  position: absolute;
  right: 0;
  top: 7px;
  width: 1px;
  height: 20px;
  background: #55575b;
}
.tab.active::after,
.tab.quiet::after {
  display: none;
}
.tab.active,
.tab.quiet {
  gap: 7px;
  padding-right: 8px;
}
.tab.active {
  background: #35363a;
  border-radius: 8px 8px 0 0;
}
.tab-label {
  flex: 1;
  min-width: 0;
  overflow: hidden;
  white-space: nowrap;
  mask-image: linear-gradient(90deg, #000 24px, transparent 42px);
}
.tab.active .tab-label,
.tab.quiet .tab-label {
  mask-image: linear-gradient(90deg, #000 10px, transparent 26px);
}
.tab:nth-child(8) .tab-label,
.tab:nth-child(17) .tab-label,
.tab:nth-child(18) .tab-label {
  mask-image: none;
}
.tab-extra,
.tab-extra svg {
  width: 12px;
  height: 12px;
}
.frame-controls {
  width: 266px;
  display: flex;
  justify-content: space-between;
}
.new-tab {
  width: 38px;
  height: 52px;
}
.caption {
  display: flex;
}
.caption .plain {
  width: 46px;
  height: 30px;
}

/* address bar */
.toolbar {
  height: 43px;
  border-bottom: 1px solid #6a6c70;
  background: #35363a;
  display: flex;
  align-items: center;
  padding-left: 6px;
}
.toolbar > .plain {
  width: 32px;
  height: 32px;
}
.toolbar > .plain svg {
  width: 16px;
  height: 16px;
}
.omnibox {
  flex: 1;
  height: 34px;
  margin-left: 6px;
  border-radius: 17px;
  background: #202124;
  display: flex;
  align-items: center;
  gap: 16px;
  padding: 0 10px 0 13px;
}
.lock {
  width: 10px;
  height: 14px;
}
.url {
  flex: 1;
  margin-left: -5px;
  font-size: 13px;
  color: #9aa0a6;
}
.url span {
  color: #fff;
}
.ext {
  width: 172px;
  display: flex;
  align-items: center;
  justify-content: space-between;
  padding: 0 13px 0 14px;
}
.avatar {
  width: 22px;
  height: 22px;
}

/* AWS header */
.aws-nav {
  height: 41px;
  display: flex;
  align-items: center;
  background: #232f3e;
  border-bottom: 1px solid #5f6b7a;
  color: #fff;
  font-size: 12px;
  font-weight: 500;
}
.logo {
  width: 67px;
  height: 22px;
  padding-left: 18px;
  border-right: 1px solid #414d5c;
}
.logo-word {
  display: block;
  height: 13px;
  font-size: 16px;
  font-weight: 600;
  line-height: 12px;
}
.logo svg {
  width: 32px;
  height: 9px;
}
.services {
  gap: 8px;
  margin-left: 17px;
}
.global-search {
  width: 540px;
  height: 30px;
  margin-left: 17px;
  padding: 0 10px;
  display: flex;
  align-items: center;
  gap: 8px;
  border: 1px solid #95a5a6;
  border-radius: 2px;
  background: #16191f;
  font-size: 14px;
  font-weight: 400;
  color: #95a5a6;
}
.global-search input,
.find input,
.task-search input {
  flex: 1;
  min-width: 0;
  border: 0;
  padding: 0;
  background: none;
  outline: 0;
}
.global-search input::placeholder,
.find input::placeholder {
  color: #95a5a6;
  opacity: 1;
  font-style: italic;
}
.nav-right {
  margin-left: auto;
  display: flex;
}
.cell {
  height: 22px;
  gap: 6px;
}
.cell + .cell {
  border-left: 1px solid #414d5c;
}
.cell .caret {
  border-width: 7px 4px 0;
}
.w-shell,
.w-bell {
  width: 51px;
}
.w-help {
  width: 49px;
}
.w-region {
  width: 91px;
}
.w-user {
  width: 115px;
}

/* console body */
.console {
  flex: 1;
  min-height: 0;
  display: flex;
  background: #16191f;
  color: #d5dbdb;
  font-size: 14px;
  line-height: 22px;
}
.sidebar {
  width: 223px;
  overflow: hidden;
  background: #2a2e33;
  padding: 20px 16px 0 12px;
}
.side-top {
  display: flex;
  flex-direction: column;
  gap: 8px;
  padding-left: 20px;
}
.side-line {
  display: flex;
  align-items: center;
  gap: 5px;
}
.close {
  margin-left: auto;
  margin-right: 6px;
}
.new-orange {
  margin-left: 3px;
  font-size: 10px;
  font-weight: 700;
  color: #ff9900;
}
.select-wrap {
  display: flex;
  align-items: center;
  height: 32px;
  margin: 4px 0 20px 20px;
  border: 1px solid #95a5a6;
  border-radius: 2px;
  background: #1a2029;
  padding-right: 11px;
}
.select-wrap select {
  flex: 1;
  appearance: none;
  border: 0;
  background: none;
  padding: 0 8px;
  font-style: italic;
  color: #879596;
}
.sidebar h2 {
  display: flex;
  align-items: center;
  gap: 8px;
  padding-left: 1px;
  margin-bottom: 9px;
  font-size: 14px;
  font-weight: 600;
}
.sidebar ul {
  display: flex;
  flex-direction: column;
  gap: 8px;
  padding-left: 20px;
  margin-bottom: 20px;
}
.current {
  color: #44b9d6;
  font-weight: 600;
}
.new-blue {
  display: inline-block;
  margin-left: 6px;
  border-bottom: 1px dashed #44b9d6;
  color: #44b9d6;
  font-size: 11px;
  font-weight: 700;
  line-height: 16px;
}
.side-scroll {
  width: 17px;
  display: flex;
  flex-direction: column;
  align-items: center;
  background: #424242;
  padding: 7px 2px;
}
.side-scroll b {
  width: 13px;
  height: 330px;
  margin-top: 6px;
  background: #686868;
}
.up,
.down,
.left,
.right {
  border: 4px solid transparent;
}
.up {
  border-top: 0;
  border-bottom-color: #8a8a8a;
}
.down {
  margin-top: auto;
  border-bottom: 0;
  border-top-color: #8a8a8a;
}
.side-scroll .down {
  border-top-color: #fff;
}
.left {
  border-left: 0;
  border-right-color: #999;
}
.right {
  margin-left: auto;
  margin-right: 6px;
  border-right: 0;
  border-left-color: #999;
}
main {
  flex: 1;
  min-width: 0;
  display: flex;
  flex-direction: column;
}
.upper {
  flex: 55 1 0;
  min-height: 0;
  padding-top: 1px;
}
.table-box {
  display: flex;
}
.table-pane {
  flex: 1;
  min-width: 0;
  background: #21252c;
}
.pane-head {
  display: flex;
  flex-direction: column;
  gap: 6px;
  padding: 10px 20px;
}
.pane-row {
  display: flex;
  align-items: center;
  height: 28px;
}
h1 {
  font-size: 17px;
  font-weight: 700;
  color: #fff;
}
h1 span {
  font-weight: 400;
  color: #95a5a6;
}
.info {
  margin-left: 19px;
  padding-top: 2px;
  font-size: 12px;
  font-weight: 600;
  color: #44b9d6;
}
.actions {
  margin-left: auto;
  display: flex;
  gap: 8px;
}
.btn {
  height: 28px;
  padding: 0;
  display: flex;
  align-items: center;
  justify-content: center;
  gap: 9px;
  border: 1px solid #879596;
  border-radius: 2px;
  background: #2a2e33;
  color: #d5dbdb;
  font: 600 14px "Open Sans", sans-serif;
}
.refresh {
  width: 50px;
}
.act {
  width: 112px;
}
.primary {
  width: 166px;
  border-color: #ff9900;
  background: #ff9900;
  color: #16191f;
}
.find {
  width: 648px;
  height: 28px;
  display: flex;
  align-items: center;
  gap: 9px;
  padding: 0 7px;
  border: 1px solid #879596;
  border-radius: 2px;
  background: #1a2029;
}
.pager {
  margin-left: auto;
  display: flex;
  align-items: center;
  gap: 19px;
}
.pager b {
  color: #fff;
}
.gear {
  height: 28px;
  padding: 0 5px 0 13px;
  border-left: 1px solid #414d5c;
  margin-left: -6px;
}
table {
  width: 100%;
  table-layout: fixed;
  border-collapse: separate;
  border-spacing: 0;
}
.c-check {
  width: 54px;
}
.c-name {
  width: 300px;
}
.c-id {
  width: 220px;
}
.c-subnet {
  width: 210px;
}
.c-edge {
  width: 170px;
}
.c-main {
  width: 100px;
}
.c-vpc {
  width: 250px;
}
th {
  height: 32px;
  padding: 0;
  border-top: 1px solid #414d5c;
  border-bottom: 1px solid #414d5c;
  color: #95a5a6;
  text-align: left;
  font-weight: 600;
}
th div {
  height: 20px;
  display: flex;
  align-items: center;
  justify-content: space-between;
  padding: 0 13px 0 16px;
  border-right: 1px solid #5a6571;
}
th:last-child div {
  padding-right: 14px;
  border-right: 0;
}
th span {
  overflow: hidden;
  white-space: nowrap;
  text-overflow: ellipsis;
}
td {
  height: 32px;
  padding: 0 20px 0 16px;
  border-bottom: 1px solid #414d5c;
  background: #2a2e33;
  overflow: hidden;
  white-space: nowrap;
  text-overflow: ellipsis;
}
tr:last-child td {
  border-bottom: 0;
}
td a {
  color: #44b9d6;
}
th.check div,
td.check {
  padding: 0 0 0 20px;
}
input[type="checkbox"] {
  appearance: none;
  display: block;
  width: 14px;
  height: 14px;
  margin: 0;
  border: 1px solid #95a5a6;
  border-radius: 2px;
  background: #1a2029;
}
.popover {
  display: inline-block;
  line-height: 18px;
  border-bottom: 1px dashed #d5dbdb;
}
.vscroll {
  width: 17px;
  display: flex;
  flex-direction: column;
  align-items: center;
  padding: 7px 0;
  background: #f0f0f0;
}
.hscroll {
  height: 17px;
  display: flex;
  align-items: center;
  padding-left: 6px;
  background: #f0f0f0;
}
.hscroll b {
  width: 17px;
  height: 17px;
  background: #dcdcdc;
}
.lower {
  flex: 45 1 0;
  min-height: 0;
  border-top: 1px solid #545b64;
}
.split-bar {
  display: grid;
  grid-template-columns: 46fr 18px 54fr;
  height: 34px;
  padding: 12px 22px 0;
}
.handle {
  height: 5px;
  margin-top: 3px;
  border-top: 1px solid #879596;
  border-bottom: 1px solid #879596;
}
.sizes {
  display: flex;
  gap: 24px;
  justify-content: flex-end;
}
.sizes svg {
  width: 16px;
  height: 16px;
}
h3 {
  padding-left: 15px;
  font-size: 14px;
  font-weight: 600;
}
.help-rail {
  width: 40px;
  padding: 12px 0 0 12px;
  background: #2a2e33;
}

/* AWS footer */
.aws-foot {
  height: 31px;
  display: flex;
  align-items: center;
  justify-content: space-between;
  padding: 0 16px;
  border-top: 1px solid #5f6b7a;
  background: #232f3e;
  color: #fff;
  font-size: 12px;
}
.foot-group {
  display: flex;
  align-items: center;
  gap: 24px;
}
.legal {
  gap: 23px;
}
.shell {
  display: flex;
  align-items: center;
  gap: 5px;
}
.copy {
  margin-right: 5px;
}

/* desktop below the window */
.wallpaper {
  height: 21px;
  padding-left: 273px;
  padding-right: 251px;
}
.back-window {
  height: 3px;
  background: #2a2a2c;
  display: flex;
  justify-content: flex-end;
  padding-right: 26px;
  box-shadow: 0 3px 10px rgba(0, 20, 70, 0.6);
}
.back-window i {
  width: 22px;
  background: #6b6b6b;
}
.taskbar {
  position: relative;
  height: 32px;
  display: flex;
  align-items: center;
  background: linear-gradient(90deg, #22383f, #20353f 55%, #1c2a44);
  color: #fff;
}
.start {
  width: 36px;
  height: 32px;
}
.task-search {
  width: 258px;
  height: 32px;
  display: flex;
  align-items: center;
  gap: 11px;
  padding: 0 0 0 12px;
  border: 1px solid #5c5f61;
  background: #323334;
  font-size: 14px;
}
.task-search input::placeholder {
  color: #d0d0d0;
  opacity: 1;
}
.lab {
  width: 58px;
  height: 30px;
}
.taskview {
  width: 16px;
  height: 16px;
  margin-left: 10px;
}
.grip {
  width: 4px;
  height: 16px;
  margin: 0 13px 0 16px;
  border-left: 1px solid #56666c;
  border-right: 1px solid #56666c;
}
.apps {
  display: flex;
  gap: 1px;
}
.app {
  width: 36px;
  height: 32px;
  position: relative;
}
.app svg {
  width: 19px;
  height: 19px;
}
.app.open::after {
  content: "";
  position: absolute;
  left: 4px;
  right: 4px;
  bottom: 2px;
  height: 2px;
  background: #f7989b;
}
.app.focused {
  background: #4d6067;
}
.app.focused::after {
  left: 0;
  right: 0;
}
.tray {
  margin-left: auto;
  display: flex;
  align-items: center;
  font-size: 13px;
}
.hp-help {
  width: 24px;
  height: 24px;
  margin-right: 43px;
}
.weather {
  gap: 10px;
}
.tray-icons {
  display: flex;
  gap: 6px;
  margin-left: 16px;
}
.tray-icons svg {
  width: 18px;
  height: 18px;
}
.clock {
  width: 70px;
  display: flex;
  flex-direction: column;
  align-items: center;
  font-size: 11px;
  line-height: 16px;
}
.note {
  width: 18px;
  height: 18px;
  margin: 0 24px 0 8px;
}
</style>
